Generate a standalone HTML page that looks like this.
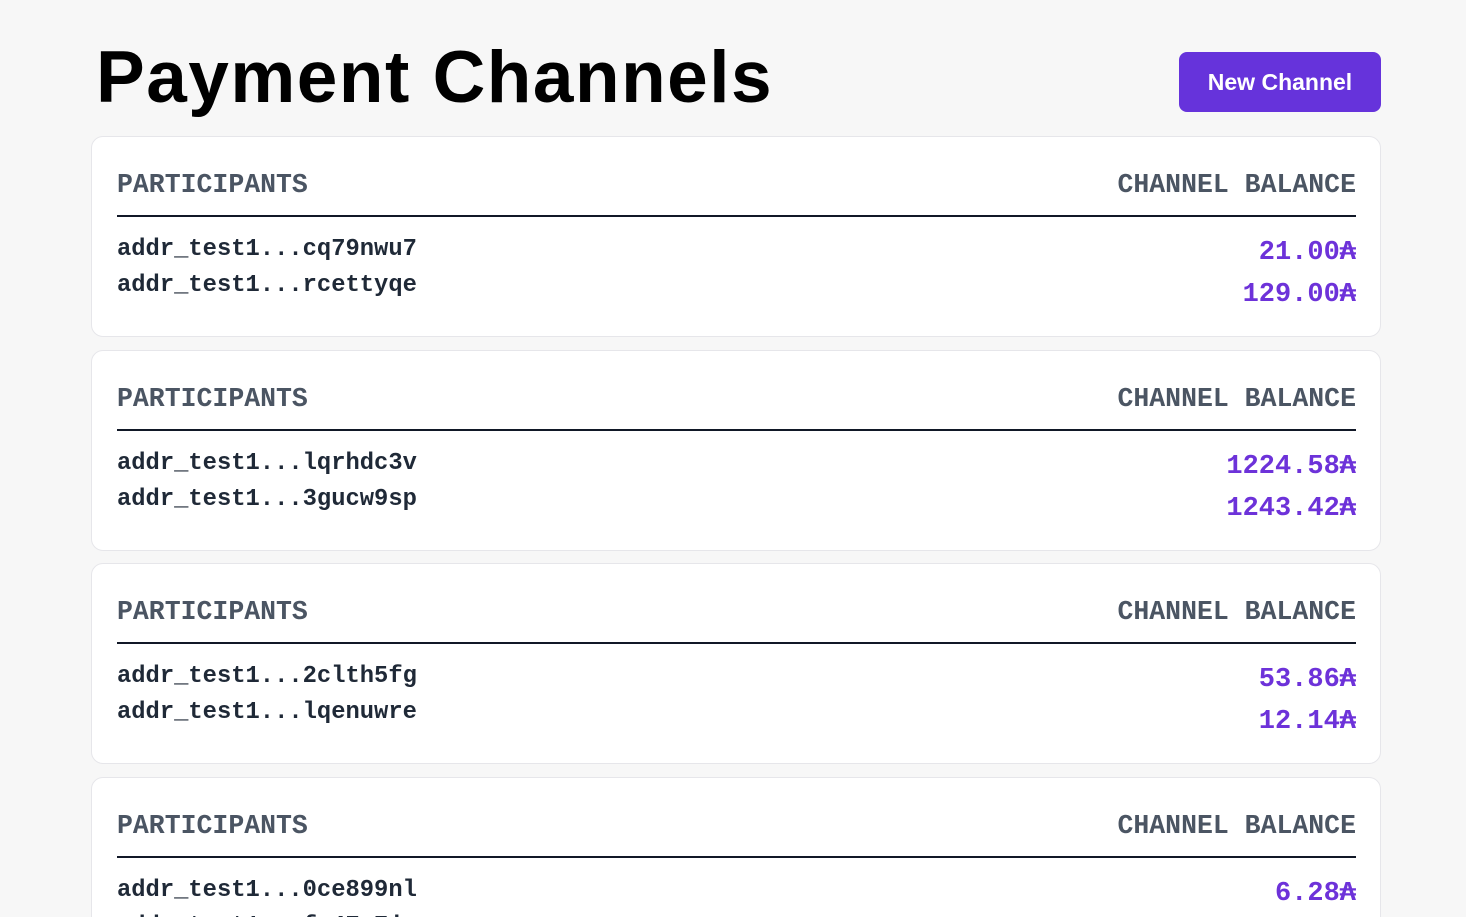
<!DOCTYPE html>
<html><head><style>
*{margin:0;padding:0;box-sizing:border-box}
html,body{width:1466px;height:917px;overflow:hidden}
body{background:#f7f7f7;font-family:"Liberation Sans",sans-serif;position:relative}
h1{position:absolute;left:96px;top:38px;font-size:73px;font-weight:bold;letter-spacing:1.5px;color:#000;line-height:80px}
.btn{position:absolute;left:1179px;top:52px;width:202px;height:60px;background:#6633db;border-radius:8px;color:#fff;font-size:23px;font-weight:bold;text-align:center;line-height:60px}
.card{position:absolute;left:91px;width:1290px;height:201px;background:#fff;border:1px solid #e6e6ea;border-radius:12px}
.hd{position:absolute;left:25px;right:24px;top:32px;height:48px;border-bottom:2px solid #111827;font-family:"Liberation Mono",monospace;font-weight:bold;font-size:26.5px;color:#4b5563;display:flex;justify-content:space-between;line-height:32px}
.ad{position:absolute;left:25px;top:95px;font-family:"Liberation Mono",monospace;font-weight:bold;font-size:23.8px;color:#1f2937;line-height:36px}
.bl{position:absolute;right:24px;top:95px;font-family:"Liberation Mono",monospace;font-weight:bold;font-size:27px;color:#6d32d9;line-height:42px;text-align:right}
</style></head><body>
<h1>Payment Channels</h1>
<div class="btn">New Channel</div>
<div class="card" style="top:136px"><div class="hd"><span>PARTICIPANTS</span><span>CHANNEL BALANCE</span></div><div class="ad">addr_test1...cq79nwu7<br>addr_test1...rcettyqe</div><div class="bl">21.00₳<br>129.00₳</div></div>
<div class="card" style="top:350px"><div class="hd"><span>PARTICIPANTS</span><span>CHANNEL BALANCE</span></div><div class="ad">addr_test1...lqrhdc3v<br>addr_test1...3gucw9sp</div><div class="bl">1224.58₳<br>1243.42₳</div></div>
<div class="card" style="top:563px"><div class="hd"><span>PARTICIPANTS</span><span>CHANNEL BALANCE</span></div><div class="ad">addr_test1...2clth5fg<br>addr_test1...lqenuwre</div><div class="bl">53.86₳<br>12.14₳</div></div>
<div class="card" style="top:777px"><div class="hd"><span>PARTICIPANTS</span><span>CHANNEL BALANCE</span></div><div class="ad">addr_test1...0ce899nl<br>addr_test1...fx47z7ja</div><div class="bl">6.28₳<br>0.00₳</div></div>
</body></html>
